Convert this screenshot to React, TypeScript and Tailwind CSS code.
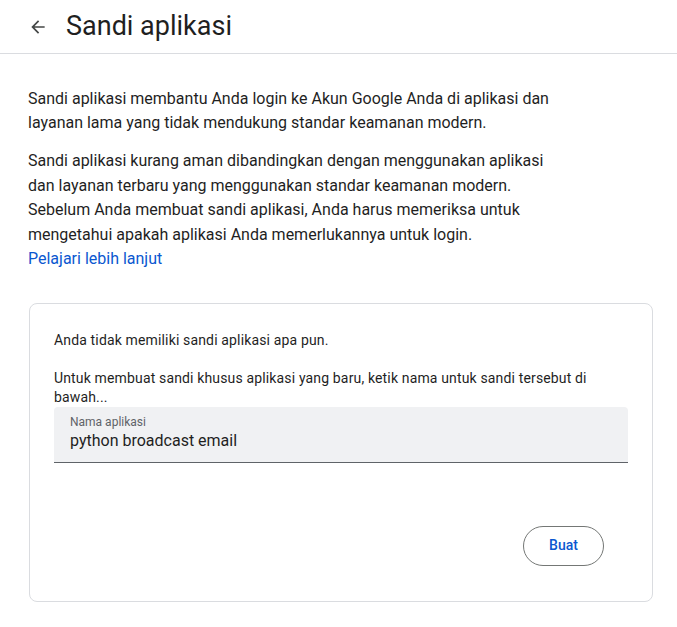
import React from "react";

export default function App() {
  return (
    <div className="w-[677px] h-[627px] bg-white overflow-hidden text-[#1f1f1f]" style={{ fontFamily: "Roboto, 'Liberation Sans', sans-serif" }}>
      <header className="h-[54px] border-b border-[#dadce0] flex items-center pl-[28px]">
        <svg width="20" height="20" viewBox="0 0 24 24" className="text-[#444746]" fill="currentColor">
          <path d="M20 11H7.83l5.59-5.59L12 4l-8 8 8 8 1.41-1.41L7.83 13H20v-2z" />
        </svg>
        <h1 className="ml-[18px] text-[27px] leading-[36px] text-[#1f1f1f] font-normal -mt-[2px]" style={{ fontFamily: "Roboto, 'Open Sans', sans-serif" }}>
          Sandi aplikasi
        </h1>
      </header>
      <main className="px-[28px] pt-[33px]">
        <p className="text-[16px] leading-[24px] text-[#1f1f1f]">
          Sandi aplikasi membantu Anda login ke Akun Google Anda di aplikasi dan
          <br />
          layanan lama yang tidak mendukung standar keamanan modern.
        </p>
        <p className="mt-[14px] text-[16px] leading-[24.5px] text-[#1f1f1f]">
          Sandi aplikasi kurang aman dibandingkan dengan menggunakan aplikasi
          <br />
          dan layanan terbaru yang menggunakan standar keamanan modern.
          <br />
          Sebelum Anda membuat sandi aplikasi, Anda harus memeriksa untuk
          <br />
          mengetahui apakah aplikasi Anda memerlukannya untuk login.
          <br />
          <a className="text-[#0b57d0]">Pelajari lebih lanjut</a>
        </p>
        <section className="mt-[31px] ml-[1px] w-[624px] h-[299px] border border-[#dadce0] rounded-[8px] px-[24px] pt-[26px]">
          <p className="text-[14px] leading-[20px] tracking-[0.15px] text-[#1f1f1f]">Anda tidak memiliki sandi aplikasi apa pun.</p>
          <p className="mt-[19px] text-[14px] leading-[19px] tracking-[0.15px] text-[#1f1f1f]">
            Untuk membuat sandi khusus aplikasi yang baru, ketik nama untuk sandi tersebut di
            <br />
            bawah...
          </p>
          <div className="mt-0 w-[574px] h-[56px] bg-[#f0f1f3] rounded-t-[4px] border-b border-[#5f6368] px-[16px] pt-[7px]">
            <div className="text-[12px] leading-[16px] text-[#5f6368]">Nama aplikasi</div>
            <div className="text-[16px] leading-[22px] text-[#1f1f1f]">python broadcast email</div>
          </div>
          <div className="flex justify-end mt-[63px] pr-[24px]">
            <button className="w-[81px] h-[40px] rounded-full border border-[#747775] text-[#0b57d0] text-[14px] font-medium bg-white">
              Buat
            </button>
          </div>
        </section>
      </main>
    </div>
  );
}
